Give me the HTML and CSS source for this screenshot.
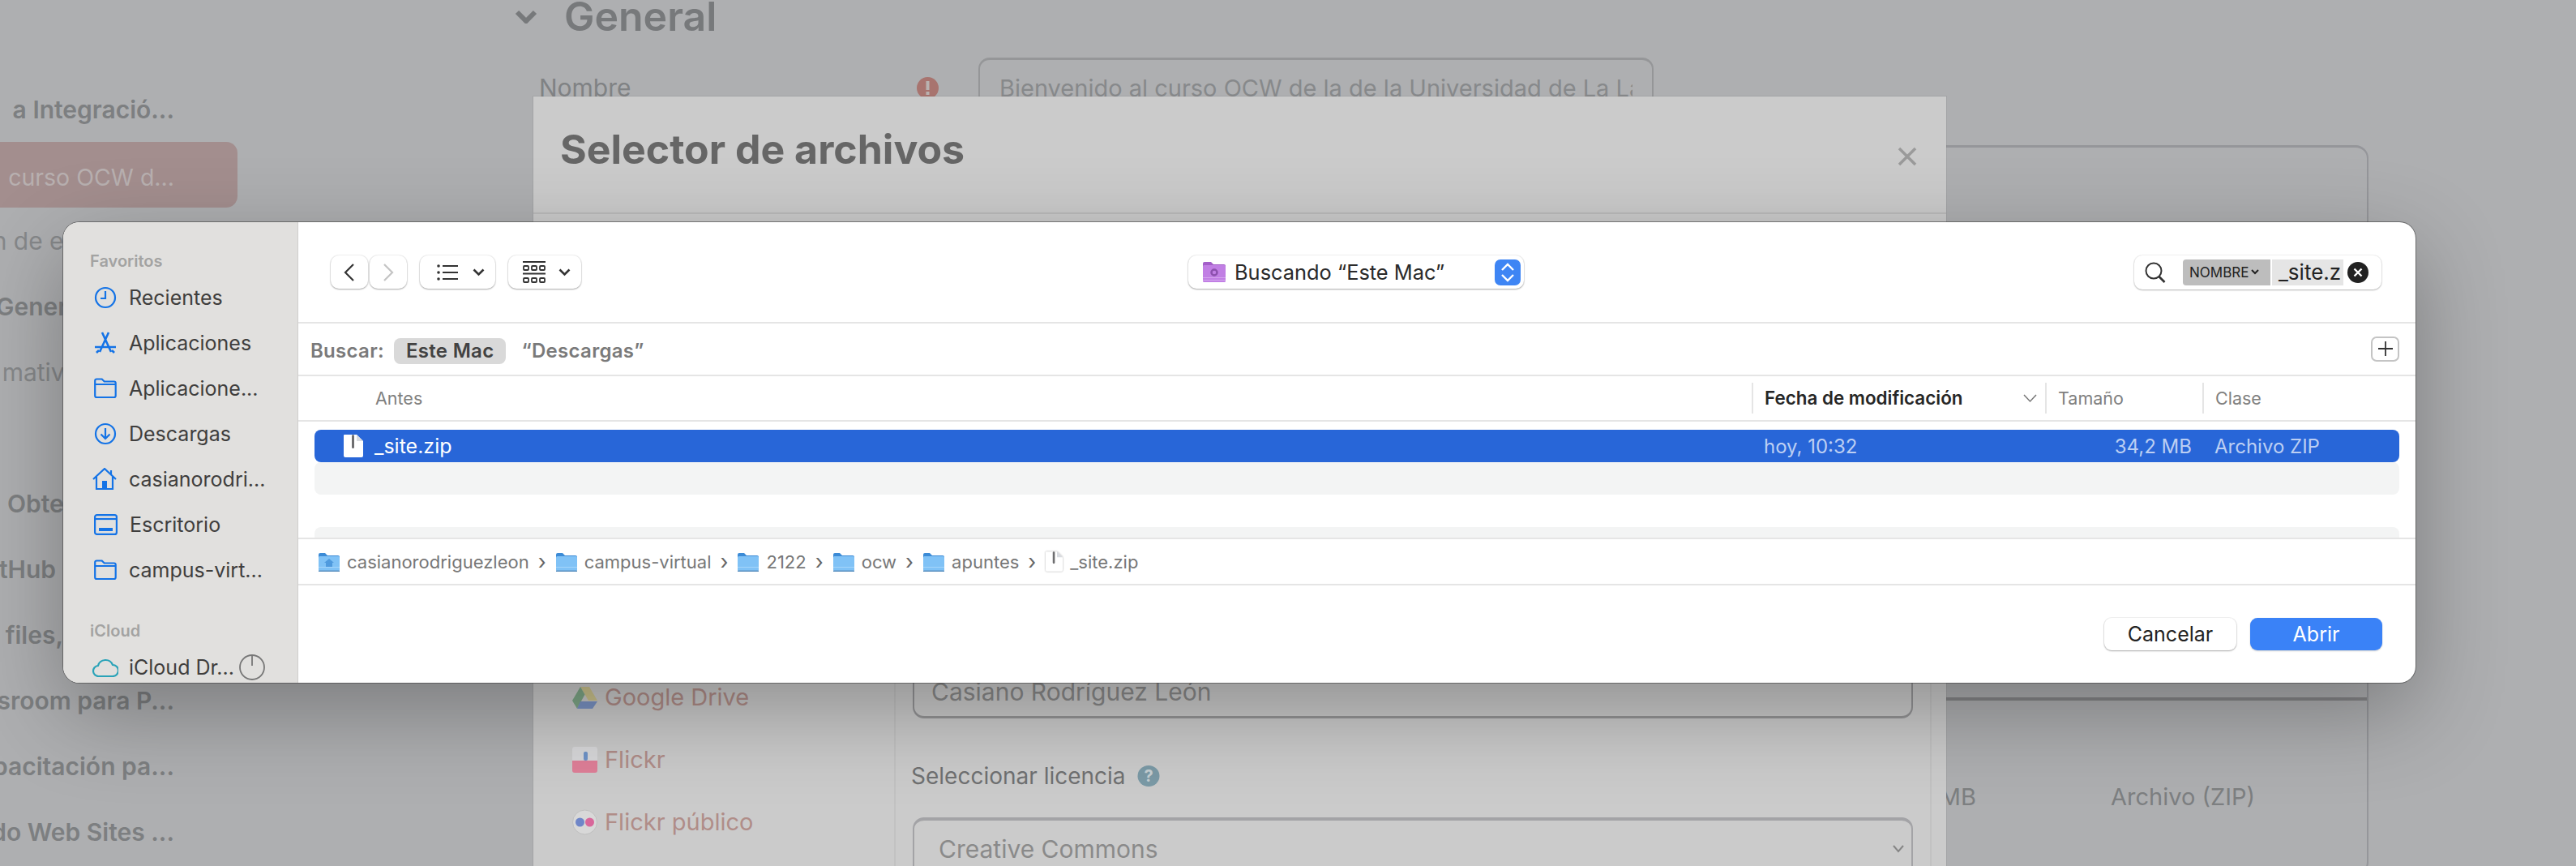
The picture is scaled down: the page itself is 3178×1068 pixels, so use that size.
FILE: index.html
```html
<!DOCTYPE html>
<html lang="en">
<head>
    <meta charset="UTF-8">
    <title>Selector de archivos</title>
    <link rel="stylesheet" href="styles.css">
</head>
<body>
    <svg class="defs" width="0" height="0">
        <symbol id="folder-blue" viewBox="0 0 26 24">
            <path d="M0 3a2 2 0 0 1 2-2h6l3 3h13a2 2 0 0 1 2 2v4H0z" fill="#3c8bd6"/>
            <rect y="5" width="26" height="18" rx="1.5" fill="#80c2f6"/>
            <rect y="18" width="26" height="1" fill="#a5d5fa"/>
            <rect y="22.5" width="26" height="1.5" fill="#5a8fbe"/>
        </symbol>
        <symbol id="folder-home" viewBox="0 0 26 24">
            <use href="#folder-blue" width="26" height="24"/>
            <path d="M13 8l-6 5h2v5h8v-5h2z" fill="#4f9ade"/>
        </symbol>
        <symbol id="zip-file" viewBox="0 0 24 28">
            <path d="M1 0h15l8 8v18a2 2 0 0 1-2 2H2a2 2 0 0 1-2-2V1a1 1 0 0 1 1-1z" fill="#fff"/>
            <path d="M16 0l8 8h-8z" fill="#d8dbe0"/>
            <rect x="10" y="0" width="3" height="17" rx="1.5" fill="#6e6e70"/>
        </symbol>
        <symbol id="place-folder" viewBox="0 0 28 26">
            <path d="M1.2 6V3.5a2 2 0 0 1 2-2h6.5l3 3h12a2 2 0 0 1 2 2v15.5a2 2 0 0 1-2 2H3.2a2 2 0 0 1-2-2z M1.2 8h25.6" fill="none" stroke="currentColor" stroke-width="2.2"/>
        </symbol>
    </svg>

    <div class="page">
        <ul class="course-list">
            <li class="strong">a Integració...</li>
            <li class="active">curso OCW d...</li>
            <li>n de ejemplos...</li>
            <li class="strong">Generales de...</li>
            <li>mativa de las...</li>
            <li></li>
            <li class="strong">Obtener el p...</li>
            <li class="strong">tHub Classro...</li>
            <li class="strong">files, Issue y...</li>
            <li class="strong">sroom para P...</li>
            <li class="strong">pacitación pa...</li>
            <li class="strong">do Web Sites ...</li>
        </ul>
        <main class="content">
            <div class="section-title">
                <svg width="28" height="17" viewBox="0 0 28 17"><path d="M3 3l11 11L25 3" fill="none" stroke="#77797b" stroke-width="6"/></svg>
                <h2>General</h2>
            </div>
            <div class="name-row">
                <label>Nombre</label>
                <svg class="alert" width="27" height="27" viewBox="0 0 27 27"><circle cx="13.5" cy="13.5" r="13.5" fill="#a8746f"/><rect x="11.5" y="5" width="4" height="11" fill="#b9b2b0"/><rect x="11.5" y="18" width="4" height="4" fill="#b9b2b0"/></svg>
                <div class="name-input"><span>Bienvenido al curso OCW de la de la Universidad de La Laguna</span></div>
            </div>
            <div class="panel">
                <div class="panel-line"></div>
                <div class="panel-row">
                    <span class="panel-size">34,2 MB</span>
                    <span>Archivo (ZIP)</span>
                </div>
            </div>
        </main>
    </div>

    <div class="modal">
        <div class="modal-head">
            <h1>Selector de archivos</h1>
            <svg width="24" height="24" viewBox="0 0 24 24"><path d="M2 2l20 20M22 2L2 22" stroke="#9a9a9a" stroke-width="3.5"/></svg>
        </div>
        <div class="modal-body">
            <ul class="source-list">
                <li>
                    <svg width="31" height="28" viewBox="0 0 31 28"><path d="M10 1h11l10 17H20z" fill="#cdc48e"/><path d="M10 1l5.500 9.500L6 28 0 18z" fill="#7fa888"/><path d="M10 19h21l-6 9H6z" fill="#7a93c4"/></svg>
                    Google Drive
                </li>
                <li>
                    <svg width="31" height="32" viewBox="0 0 31 32"><path d="M3 0h25a3 3 0 0 1 3 3v16H0V3a3 3 0 0 1 3-3z" fill="#d8d8da"/><path d="M0 17h31v12a3 3 0 0 1-3 3H3a3 3 0 0 1-3-3z" fill="#df7f98"/><rect x="14" y="6" width="5" height="11" rx="2" fill="#6f93c8"/></svg>
                    Flickr
                </li>
                <li>
                    <svg width="31" height="32" viewBox="0 0 31 32"><circle cx="15.500" cy="16" r="15" fill="#d8d8d8" stroke="#bfbfbf"/><circle cx="9.500" cy="16" r="5.500" fill="#6f86c8"/><circle cx="21.500" cy="16" r="5.500" fill="#d8679a"/></svg>
                    Flickr público
                </li>
            </ul>
            <div class="pane">
                <div class="field author">Casiano Rodríguez León</div>
                <div class="licence-label">Seleccionar licencia
                    <svg width="28" height="26" viewBox="0 0 28 26"><ellipse cx="14" cy="13" rx="13.500" ry="13" fill="#7b9aa6"/><text x="14" y="20" text-anchor="middle" class="help-mark">?</text></svg>
                </div>
                <div class="field licence">Creative Commons
                    <svg width="14" height="10" viewBox="0 0 14 10"><path d="M1 1l6 7 6-7" fill="none" stroke="#858585" stroke-width="2"/></svg>
                </div>
            </div>
        </div>
    </div>

    <div class="dialog">
        <aside class="places">
            <div class="places-title">Favoritos</div>
            <div class="place">
                <svg width="28" height="28" viewBox="0 0 28 28" fill="none" stroke="currentColor" stroke-width="2.200"><circle cx="14" cy="14" r="12"/><path d="M14 6v9H8"/></svg>
                Recientes
            </div>
            <div class="place">
                <svg width="28" height="28" viewBox="0 0 28 28" fill="none" stroke="currentColor" stroke-width="2.600"><path d="M10 1l11 24M18 1L7 25M1 19h26M3 26l3-3M25 26l-3-3"/></svg>
                Aplicaciones
            </div>
            <div class="place">
                <svg width="28" height="26"><use href="#place-folder"/></svg>
                Aplicacione...
            </div>
            <div class="place">
                <svg width="28" height="28" viewBox="0 0 28 28" fill="none" stroke="currentColor" stroke-width="2.200"><circle cx="14" cy="14" r="12"/><path d="M14 7v13M8.500 14.500L14 20l5.500-5.500"/></svg>
                Descargas
            </div>
            <div class="place">
                <svg class="home" width="30" height="28" viewBox="0 0 30 28" fill="none" stroke="currentColor" stroke-width="2.200"><path d="M1 14L15 1l14 13M5 11v15h20V11M23 8V3"/><rect x="12" y="16" width="6" height="10" fill="currentColor" stroke="none"/></svg>
                casianorodri...
            </div>
            <div class="place">
                <svg width="29" height="26" viewBox="0 0 29 26" fill="none" stroke="currentColor" stroke-width="2.200"><rect x="1.100" y="1.100" width="26.800" height="23.800" rx="2.500"/><path d="M1 6h27"/><rect x="6" y="17" width="17" height="4" fill="currentColor" stroke="none"/></svg>
                Escritorio
            </div>
            <div class="place">
                <svg width="28" height="26"><use href="#place-folder"/></svg>
                campus-virt...
            </div>
            <div class="places-title icloud">iCloud</div>
            <div class="place">
                <svg class="cloud" width="32" height="24" viewBox="0 0 32 24" fill="none" stroke="currentColor" stroke-width="2.200"><path d="M8 23a6.500 6.500 0 0 1-1-13A9.500 9.500 0 0 1 25 9a7 7 0 0 1 0 14z"/></svg>
                iCloud Dr...
                <svg class="spinner" width="32" height="32" viewBox="0 0 32 32" fill="none" stroke="#777" stroke-width="1.800"><circle cx="16" cy="16" r="15"/><path d="M16 1v13"/></svg>
            </div>
        </aside>

        <section class="browser">
            <header class="toolbar">
                <div class="tool-group">
                    <div class="nav-pair">
                        <button class="tool nav-btn"><svg width="14" height="24" viewBox="0 0 14 24"><path d="M12 2L2 12l10 10" fill="none" stroke="#333" stroke-width="2.200"/></svg></button>
                        <button class="tool nav-btn"><svg width="14" height="24" viewBox="0 0 14 24"><path d="M2 2l10 10L2 22" fill="none" stroke="#c4c4c4" stroke-width="2.200"/></svg></button>
                    </div>
                    <button class="tool menu-btn">
                        <svg width="26" height="20" viewBox="0 0 26 20" fill="#333"><circle cx="2" cy="2" r="1.800"/><circle cx="2" cy="10" r="1.800"/><circle cx="2" cy="18" r="1.800"/><rect x="7" y="1" width="19" height="2"/><rect x="7" y="9" width="19" height="2"/><rect x="7" y="17" width="19" height="2"/></svg>
                        <svg width="15" height="10" viewBox="0 0 15 10"><path d="M1.500 1.500l6 6 6-6" fill="none" stroke="#333" stroke-width="2.600"/></svg>
                    </button>
                    <button class="tool menu-btn grid-btn">
                        <svg width="28" height="28" viewBox="0 0 28 28" fill="none" stroke="#333" stroke-width="1.800"><path d="M0 1h28M0 15.500h28"/><rect x="1" y="6" width="6" height="5" rx="1"/><rect x="11" y="6" width="6" height="5" rx="1"/><rect x="21" y="6" width="6" height="5" rx="1"/><rect x="1" y="21" width="6" height="5" rx="1"/><rect x="11" y="21" width="6" height="5" rx="1"/><rect x="21" y="21" width="6" height="5" rx="1"/></svg>
                        <svg width="15" height="10" viewBox="0 0 15 10"><path d="M1.500 1.500l6 6 6-6" fill="none" stroke="#333" stroke-width="2.600"/></svg>
                    </button>
                </div>
                <div class="tool location">
                    <svg width="28" height="27" viewBox="0 0 28 27"><path d="M0 3a2 2 0 0 1 2-2h8l3 3h13a2 2 0 0 1 2 2v4H0z" fill="#a45fc9"/><rect y="5" width="28" height="21" rx="1.500" fill="#c17fe4"/><rect y="20" width="28" height="1" fill="#d5a5ee"/><rect y="23" width="28" height="1" fill="#d5a5ee"/><circle cx="14" cy="14" r="3.500" fill="none" stroke="#8c50ad" stroke-width="2.500"/></svg>
                    <span>Buscando “Este Mac”</span>
                    <span class="stepper">
                        <svg width="18" height="24" viewBox="0 0 18 24" fill="none" stroke="#fff" stroke-width="2.400"><path d="M2 9l7-7 7 7M2 15l7 7 7-7"/></svg>
                    </span>
                </div>
                <div class="search">
                    <svg width="26" height="26" viewBox="0 0 26 26" fill="none" stroke="#333" stroke-width="2"><circle cx="11" cy="11" r="9.500"/><path d="M17.500 18l7 7" stroke-width="2.600"/></svg>
                    <span class="token-key">NOMBRE <svg width="10" height="7" viewBox="0 0 10 7"><path d="M1 1l4 4 4-4" fill="none" stroke="#222" stroke-width="2"/></svg></span>
                    <span class="token-value">_site.z</span>
                    <span class="clear"><svg width="12" height="12" viewBox="0 0 12 12"><path d="M1.500 1.500l9 9M10.500 1.500l-9 9" stroke="#fff" stroke-width="2.400"/></svg></span>
                </div>
            </header>

            <div class="scope">
                <span class="scope-label">Buscar:</span>
                <span class="scope-item selected">Este Mac</span>
                <span class="scope-item">“Descargas”</span>
                <button class="add-btn"><svg width="20" height="20" viewBox="0 0 20 20"><path d="M10 1v18M1 10h18" stroke="#333" stroke-width="1.800"/></svg></button>
            </div>

            <div class="columns">
                <div class="col col-name">Antes</div>
                <div class="col col-sorted">Fecha de modificación
                    <svg width="17" height="11" viewBox="0 0 17 11"><path d="M1 1l7.500 8L16 1" fill="none" stroke="#777" stroke-width="1.500"/></svg>
                </div>
                <div class="col">Tamaño</div>
                <div class="col">Clase</div>
            </div>

            <div class="file-list">
                <div class="file-row picked">
                    <div class="file-name"><svg width="24" height="28"><use href="#zip-file"/></svg>_site.zip</div>
                    <div class="file-meta">hoy, 10:32</div>
                    <div class="file-meta file-size">34,2 MB</div>
                    <div class="file-meta">Archivo ZIP</div>
                </div>
                <div class="file-row stripe"></div>
                <div class="file-row"></div>
                <div class="file-row stripe"></div>
            </div>

            <nav class="pathbar">
                <svg width="26" height="24"><use href="#folder-home"/></svg>
                <span>casianorodriguezleon</span><i>›</i>
                <svg width="26" height="24"><use href="#folder-blue"/></svg>
                <span>campus-virtual</span><i>›</i>
                <svg width="26" height="24"><use href="#folder-blue"/></svg>
                <span>2122</span><i>›</i>
                <svg width="26" height="24"><use href="#folder-blue"/></svg>
                <span>ocw</span><i>›</i>
                <svg width="26" height="24"><use href="#folder-blue"/></svg>
                <span>apuntes</span><i>›</i>
                <svg class="path-zip" width="21" height="25"><use href="#zip-file"/></svg>
                <span>_site.zip</span>
            </nav>

            <footer class="actions">
                <button class="action">Cancelar</button>
                <button class="action primary">Abrir</button>
            </footer>
        </section>
    </div>
</body>
</html>
```

FILE: styles.css
```css
html, body {
    margin: 0;
    height: 100%;
    overflow: hidden;
}
body {
    position: relative;
    background: #aeafb1;
    font-family: "Inter", "Liberation Sans", sans-serif;
}
ul {
    list-style: none;
    margin: 0;
    padding: 0;
}
h1, h2 {
    margin: 0;
}
.defs {
    position: absolute;
}

/* page behind the dialogs */
.page {
    display: flex;
    height: 100%;
}
.course-list {
    flex: 0 0 293px;
    padding-top: 94px;
    overflow: hidden;
    font-size: 30px;
    color: #86888a;
}
.course-list li {
    height: 81px;
    padding-right: 78px;
    display: flex;
    align-items: center;
    justify-content: flex-end;
    white-space: nowrap;
}
.course-list .strong {
    font-weight: 600;
    color: #7d7f81;
}
.course-list .active {
    background: #a38e8e;
    color: #b8b0b0;
    border-radius: 0 14px 14px 0;
    padding-top: 5px;
    box-sizing: border-box;
    font-size: 28.500px;
}
.content {
    flex: 1;
    padding-left: 342px;
    color: #808284;
}
.section-title {
    display: flex;
    align-items: center;
    gap: 33px;
    height: 40px;
}
.section-title h2 {
    font-size: 50px;
    font-weight: 600;
    line-height: 40px;
    color: #77797b;
}
.name-row {
    display: flex;
    align-items: center;
    margin-top: 31px;
    font-size: 30px;
}
.name-row label {
    margin-left: 30px;
    width: 466px;
}
.alert {
    margin-right: 49px;
}
.name-input {
    width: 833px;
    height: 74px;
    box-sizing: border-box;
    border: 2px solid #959698;
    border-top-width: 3px;
    border-radius: 14px;
    padding-left: 24px;
    display: flex;
    align-items: center;
    white-space: nowrap;
    font-size: 29px;
}
.name-input span {
    width: 781px;
    overflow: hidden;
    color: #87898b;
}
.panel {
    margin: 34px 0 0 572px;
    width: 1715px;
    height: 900px;
    box-sizing: border-box;
    border: 2px solid #95969a;
    border-top-width: 3px;
    border-radius: 16px;
}
.panel-line {
    margin-top: 678px;
    height: 4px;
    background: #868688;
}
.panel-row {
    display: grid;
    grid-template-columns: 1229px auto;
    column-gap: 166px;
    align-items: center;
    height: 236px;
    font-size: 29px;
    color: #7d7f81;
}
.panel-size {
    text-align: right;
}

/* "Selector de archivos" modal of the site */
.modal {
    position: absolute;
    left: 658px;
    right: 777px;
    top: 119px;
    bottom: 0;
    background: #cbcbcb;
    box-shadow: 0 0 0 1px rgba(0, 0, 0, 0.06);
}
.modal-head {
    height: 145px;
    box-sizing: border-box;
    border-bottom: 2px solid #bcbcbc;
    padding: 35px 36px 0 33px;
    display: flex;
    justify-content: space-between;
    align-items: flex-start;
}
.modal-head h1 {
    font-size: 50px;
    font-weight: 700;
    line-height: 60px;
    color: #666;
}
.modal-head svg {
    margin-top: 27px;
}
.modal-body {
    display: flex;
}
.source-list {
    flex: 0 0 445px;
    box-sizing: border-box;
    padding: 557px 0 0 48px;
    font-size: 29px;
    color: #b08d88;
}
.source-list li {
    height: 77px;
    display: flex;
    align-items: center;
    gap: 9px;
}
.pane {
    width: 1280px;
    height: 880px;
    margin-top: 20px;
    box-sizing: border-box;
    border: 2px solid #c2c2c2;
    border-width: 0 2px;
    padding: 536px 21px 0;
}
.field {
    border: 2px solid #959597;
    border-radius: 14px;
    box-sizing: border-box;
    font-size: 30px;
    color: #8a8a8a;
    display: flex;
    align-items: center;
}
.author {
    height: 66px;
    border-bottom-width: 3px;
    padding-left: 21px;
}
.licence-label {
    margin: 51px 0 0 -2px;
    height: 40px;
    display: flex;
    align-items: center;
    gap: 14px;
    font-size: 28px;
    color: #707172;
}
.help-mark {
    font-size: 20px;
    font-weight: 700;
    fill: #c6cfd2;
}
.licence {
    margin-top: 31px;
    height: 78px;
    border-top-width: 4px;
    border-color: #a3a3a6;
    padding: 0 9px 2px 30px;
    justify-content: space-between;
}

/* macOS open panel */
.dialog {
    position: absolute;
    left: 78px;
    top: 274px;
    width: 2902px;
    height: 568px;
    display: flex;
    background: #fff;
    border-radius: 20px;
    overflow: hidden;
    box-shadow: 0 0 0 1px rgba(60, 60, 60, 0.55), 0 35px 110px rgba(0, 0, 0, 0.3);
}
.places {
    flex: 0 0 290px;
    box-sizing: border-box;
    padding-top: 34px;
    background: #e1e0de;
    border-right: 1px solid #cfcecc;
    font-size: 25px;
    color: #3f3e3d;
}
.places-title {
    height: 28px;
    line-height: 28px;
    margin: 0 0 3px 33px;
    font-size: 20px;
    font-weight: 600;
    color: #a3a3a2;
}
.places-title.icloud {
    margin-top: 33px;
}
.place {
    height: 56px;
    display: flex;
    align-items: center;
    padding-left: 38px;
    gap: 15px;
    color: #3f3e3d;
    white-space: nowrap;
}
.place > svg {
    flex: none;
    color: #1473e6;
}
.place > .home {
    margin-left: -2px;
}
.place > .cloud {
    color: #2aa3b8;
    margin: 0 -2px;
}
.place > .spinner {
    margin-left: -9px;
}

.browser {
    flex: 1;
    display: flex;
    flex-direction: column;
    min-width: 0;
}
.toolbar {
    height: 125px;
    box-sizing: border-box;
    border-bottom: 2px solid #e5e5e5;
    padding: 0 42px 0 40px;
    display: grid;
    grid-template-columns: 1fr auto 1fr;
    align-items: center;
}
.tool-group {
    display: flex;
    align-items: center;
    gap: 16px;
}
.nav-pair {
    display: flex;
    gap: 2px;
}
.tool {
    height: 41px;
    box-sizing: border-box;
    border: 0;
    padding: 0;
    background: #fff;
    border-radius: 10px;
    box-shadow: 0 1px 2px rgba(0, 0, 0, 0.3), 0 0 0 1px rgba(0, 0, 0, 0.05);
}
.nav-btn {
    width: 46px;
    display: flex;
    align-items: center;
    justify-content: center;
}
.menu-btn {
    width: 93px;
    display: flex;
    align-items: center;
    gap: 18px;
    padding-left: 21px;
}
.grid-btn {
    width: 90px;
    gap: 16px;
    padding-left: 18px;
}
.location {
    width: 414px;
    display: flex;
    align-items: center;
    padding-left: 18px;
    gap: 11px;
    font-size: 25.4px;
    color: #2a2a2a;
    white-space: nowrap;
}
.stepper {
    margin-left: auto;
    margin-right: 4px;
    width: 32px;
    height: 32px;
    border-radius: 7px;
    background: #3e85f4;
    display: flex;
    align-items: center;
    justify-content: center;
}
.search {
    justify-self: end;
    width: 305px;
    height: 42px;
    box-sizing: border-box;
    border-radius: 10px;
    box-shadow: 0 1px 2px rgba(0, 0, 0, 0.25), 0 0 0 1px rgba(0, 0, 0, 0.05);
    display: flex;
    align-items: center;
    padding-left: 13px;
    color: #222;
}
.search > svg {
    margin-right: 21px;
}
.token-key {
    width: 108px;
    height: 32px;
    box-sizing: border-box;
    background: #bdbdbd;
    border-radius: 4px 0 0 4px;
    font-size: 17px;
    display: flex;
    align-items: center;
    padding-left: 8px;
    gap: 3px;
    white-space: nowrap;
}
.token-value {
    margin-left: 2px;
    width: 88px;
    height: 32px;
    box-sizing: border-box;
    background: #e5e5e5;
    font-size: 26px;
    line-height: 32px;
    padding-left: 8px;
    overflow: hidden;
    white-space: nowrap;
}
.clear {
    margin-left: 5px;
    width: 26px;
    height: 26px;
    border-radius: 50%;
    background: #222;
    display: flex;
    align-items: center;
    justify-content: center;
}
.scope {
    height: 65px;
    box-sizing: border-box;
    border-bottom: 2px solid #e5e5e5;
    padding: 4px 20px 0 15px;
    display: flex;
    align-items: center;
    font-size: 24px;
    font-weight: 600;
    letter-spacing: 0.3px;
    color: #7a7a7a;
}
.scope-item {
    padding: 0 15px;
    height: 32px;
    line-height: 32px;
    margin-left: 4px;
}
.scope-label {
    margin-right: 12px;
}
.scope-item.selected {
    background: #d9d9d9;
    border-radius: 8px;
    color: #424242;
    margin-left: 0;
}
.add-btn {
    margin: -5px 0 0 auto;
    width: 35px;
    height: 31px;
    padding: 0;
    background: #fff;
    border: 2px solid #c4c4c4;
    border-radius: 7px;
    display: flex;
    align-items: center;
    justify-content: center;
}
.columns {
    height: 56px;
    box-sizing: border-box;
    border-bottom: 2px solid #e5e5e5;
    display: grid;
    grid-template-columns: 1793px 362px 194px 1fr;
    align-items: center;
    font-size: 21.500px;
    color: #808080;
}
.col {
    height: 38px;
    box-sizing: border-box;
    border-left: 2px solid #e5e5e5;
    padding: 0 14px;
    line-height: 38px;
}
.col-name {
    border-left: 0;
    padding-left: 95px;
}
.col-sorted {
    display: flex;
    align-items: center;
    justify-content: space-between;
    padding-right: 10px;
    font-size: 22.400px;
    font-weight: 600;
    color: #262626;
    white-space: nowrap;
}
.file-list {
    height: 143px;
    box-sizing: border-box;
    padding-top: 10px;
    overflow: hidden;
}
.file-row {
    margin: 0 20px;
    height: 40px;
    display: grid;
    grid-template-columns: 1773px 362px 194px 1fr;
    align-items: center;
    border-radius: 8px;
    font-size: 24px;
}
.picked {
    background: #2866d8;
    color: #bccff3;
}
.stripe {
    background: #f3f4f4;
}
.file-name {
    padding-left: 36px;
    display: flex;
    align-items: center;
    gap: 14px;
    font-size: 25px;
    color: #fff;
}
.file-meta {
    padding-left: 15px;
    white-space: nowrap;
}
.file-size {
    text-align: right;
    padding: 0 13px 0 0;
}
.pathbar {
    height: 59px;
    box-sizing: border-box;
    border-top: 2px solid #e5e5e5;
    border-bottom: 2px solid #e5e5e5;
    padding-left: 25px;
    display: flex;
    align-items: center;
    gap: 9px;
    font-size: 22px;
    color: #777;
    white-space: nowrap;
}
.pathbar i {
    font-style: normal;
    font-size: 26px;
    margin: 0 3px 0 2px;
    color: #666;
}
.path-zip {
    filter: drop-shadow(0 0 1px #aaa);
}
.actions {
    flex: 1;
    display: flex;
    justify-content: flex-end;
    gap: 17px;
    padding: 40px 41px 0 0;
}
.action {
    width: 163px;
    height: 40px;
    border: 0;
    padding: 0;
    border-radius: 9px;
    background: #fff;
    box-shadow: 0 1px 2px rgba(0, 0, 0, 0.3), 0 0 0 1px rgba(0, 0, 0, 0.05);
    font-family: inherit;
    font-size: 25px;
    color: #222;
}
.action.primary {
    background: #3a82f7;
    color: #fff;
    box-shadow: 0 1px 2px rgba(0, 0, 0, 0.2);
}
```
